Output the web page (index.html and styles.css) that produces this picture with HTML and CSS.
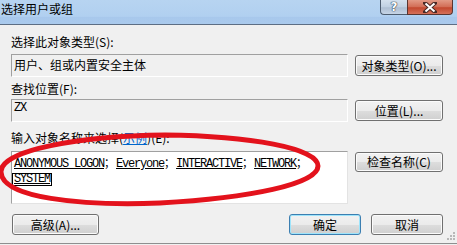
FILE: index.html
```html
<!DOCTYPE html>
<html>
<head>
<meta charset="utf-8">
<link rel="stylesheet" href="styles.css">
</head>
<body>
<div class="win">
  <div class="titlebar">
    <span class="title">选择用户或组</span>
    <div class="caps">
      <div class="cap help">?</div>
      <div class="cap close">
        <svg width="14" height="11" viewBox="0 0 14 11"><path d="M2 1 L12 10 M12 1 L2 10" stroke="#4a2a26" stroke-width="4" stroke-linecap="square"/><path d="M2.5 1.5 L11.5 9.5 M11.5 1.5 L2.5 9.5" stroke="#ffffff" stroke-width="2"/></svg>
      </div>
    </div>
  </div>
  <div class="client">
    <div class="label l1">选择此对象类型(S):</div>
    <div class="row r1">
      <div class="field">用户、组或内置安全主体</div>
      <button class="btn">对象类型(O)...</button>
    </div>
    <div class="label l2">查找位置(F):</div>
    <div class="row r2">
      <div class="field mono">ZX</div>
      <button class="btn">位置(L)...</button>
    </div>
    <div class="label l3">输入对象名称来选择(<span class="link">示例</span>)(E):</div>
    <div class="row r3">
      <div class="textarea"><span class="obj">ANONYMOUS LOGON</span><span class="sep">；</span><span class="obj">Everyone</span><span class="sep">；</span><span class="obj">INTERACTIVE</span><span class="sep">；</span><span class="obj">NETWORK</span><span class="sep">；</span><br><span class="obj sel">SYSTEM</span></div>
      <button class="btn top">检查名称(C)</button>
    </div>
    <div class="bottom">
      <button class="btn adv">高级(A)...</button>
      <div class="spacer"></div>
      <button class="btn small default">确定</button>
      <button class="btn small">取消</button>
    </div>
    <svg class="grip" width="10" height="10" viewBox="0 0 10 10">
      <g fill="#b8b8b8"><rect x="8" y="0" width="2" height="2"/><rect x="5" y="3" width="2" height="2"/><rect x="8" y="3" width="2" height="2"/><rect x="2" y="6" width="2" height="2"/><rect x="5" y="6" width="2" height="2"/><rect x="8" y="6" width="2" height="2"/></g>
    </svg>
  </div>
  <svg class="mark" width="457" height="245" viewBox="0 0 457 245">
    <path d="M165 135 C250 136 318 148 318 166 C318 184 250 198 160 203 C80 206 2 198 1 172 C0 150 80 136 165 135 Z" fill="none" stroke="#e3121c" stroke-width="5"/>
  </svg>
</div>
</body>
</html>
```

FILE: styles.css
```css
html, body {
  margin: 0;
  padding: 0;
  background: #f0f0f0;
  overflow: hidden;
}

.win {
  position: relative;
  width: 457px;
  height: 245px;
  font-family: "Noto Sans CJK SC", "Noto Sans", sans-serif;
  font-size: 12px;
  color: #000;
}

.titlebar {
  display: flex;
  align-items: flex-start;
  height: 24px;
  background: linear-gradient(#b7d4f1 0%, #b1d0f0 68%, #a8c8ec 72%, #aacaed 100%);
  border-bottom: 1px solid #5d6e84;
}

.title {
  padding: 0 0 0 1px;
  line-height: 18px;
  font-size: 12px;
}

.caps {
  display: flex;
  margin-left: auto;
  margin-right: 4px;
}

.cap {
  height: 14px;
  border: 1px solid #4d5d70;
  border-top: none;
  display: flex;
  align-items: center;
  justify-content: center;
}

.help {
  width: 26px;
  border-right: none;
  border-radius: 0 0 0 4px;
  background: linear-gradient(#d4e1ee 0%, #c0d0e2 50%, #aebfd3 55%, #c6d5e6 100%);
  font-family: "DejaVu Sans", sans-serif;
  font-weight: bold;
  font-size: 12px;
  color: #fff;
  text-shadow: 0 0 1px #2b3a4c, 0 0 1px #2b3a4c, 0 0 1px #2b3a4c;
  line-height: 14px;
}

.close {
  width: 44px;
  border-radius: 0 0 4px 0;
  border-color: #5a3530;
  background: linear-gradient(#e29a86 0%, #d26c55 50%, #c2472e 55%, #d5715a 100%);
}

.client {
  position: relative;
  display: flex;
  flex-direction: column;
  padding-left: 11px;
  height: 218px;
  border-bottom: 1px solid #8e8f8f;
}

.label {
  line-height: 14px;
  height: 14px;
  white-space: nowrap;
}

.l1 { margin-top: 10px; }
.l2 { margin-top: 5px; }
.l3 { margin-top: 9px; }

.link {
  color: #0066cc;
  text-decoration: underline;
}

.row {
  display: grid;
  grid-template-columns: 337px 88px;
  column-gap: 7px;
  align-items: center;
}

.r1 { margin-top: 5px; }
.r2 { margin-top: 3px; }
.r3 { margin-top: 6px; align-items: start; }

.field {
  box-sizing: border-box;
  height: 23px;
  padding: 2px 0 0 2px;
  line-height: 16px;
  background: #f0f0f0;
  border: 1px solid #ffffff;
  border-top-color: #a0a0a0;
  border-left-color: #a0a0a0;
  white-space: nowrap;
}

.field.mono {
  font-family: "Liberation Mono", monospace;
  font-size: 12px;
  letter-spacing: -1.2px;
  line-height: 14px;
  padding-top: 1px;
}

.textarea {
  box-sizing: border-box;
  height: 53px;
  padding: 5px 0 0 2px;
  background: #ffffff;
  border: 1px solid #e3e3e3;
  border-top-color: #a0a0a0;
  border-left-color: #a0a0a0;
  font-family: "Liberation Mono", monospace;
  font-size: 12px;
  line-height: 15px;
  white-space: nowrap;
}

.obj {
  text-decoration: underline;
  letter-spacing: -1.2px;
}

.sep {
  display: inline-block;
  width: 12px;
  font-family: "Noto Sans CJK SC", sans-serif;
  font-size: 11px;
  line-height: 11px;
}

.sel {
  display: inline-block;
  line-height: 11px;
  margin-left: -1px;
  padding: 0 1px 0 1px;
  outline: 1px solid #000;
  outline-offset: 0;
}

.btn {
  box-sizing: border-box;
  height: 21px;
  margin: 0;
  padding: 0;
  border: 1px solid #707070;
  border-radius: 3px;
  background: linear-gradient(#f2f2f2 0%, #ebebeb 50%, #dddddd 51%, #cfcfcf 100%);
  box-shadow: inset 0 0 0 1px #fbfbfb;
  font-family: "Noto Sans CJK SC", sans-serif;
  font-size: 12px;
  line-height: 18px;
  color: #000;
  white-space: nowrap;
}

.btn.top {
  height: 20px;
  margin-top: 1px;
}

.bottom {
  display: flex;
  margin-top: 10px;
  width: 432px;
  gap: 10px;
}

.spacer { flex: 1; }

.btn.adv {
  width: 87px;
  margin-left: 1px;
}

.btn.small {
  width: 72px;
}

.btn.default {
  border-color: #3c7fb1;
  box-shadow: inset 0 0 0 1px #9ee4fb;
}

.grip {
  position: absolute;
  right: 2px;
  bottom: 1px;
}

.mark {
  position: absolute;
  left: 0;
  top: 0;
  pointer-events: none;
}
```
